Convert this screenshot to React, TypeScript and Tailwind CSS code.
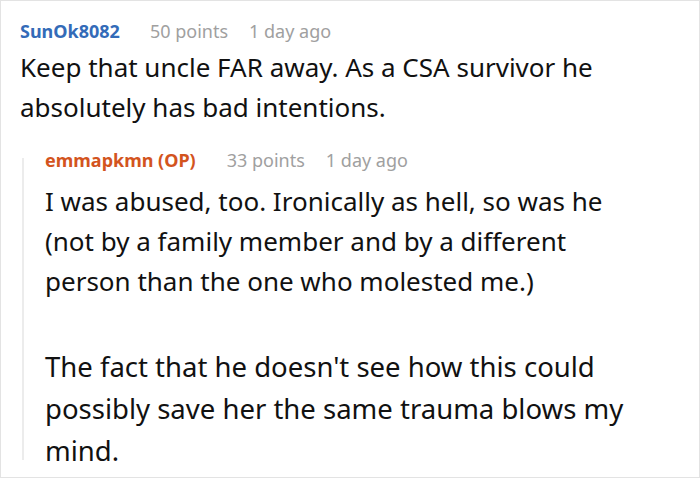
export default function App() {
  return (
    <div className="h-[478px] w-[700px] overflow-hidden border border-[#e3e3e3] bg-white font-['Noto_Sans',sans-serif]">
      <div className="pl-[19px] pr-[30px] pt-[15px]">
        {/* top comment */}
        <div className="flex items-center text-[18px] leading-[30px]">
          <span className="font-bold text-[#336bb8]">SunOk8082</span>
          <span className="ml-[30px] text-[#a0a0a0]">50 points</span>
          <span className="ml-[21px] text-[#a0a0a0]">1 day ago</span>
        </div>
        <p className="mt-[1px] text-[26px] leading-[40px] text-[#111]">
          Keep that uncle FAR away. As a CSA survivor he absolutely has bad intentions.
        </p>

        {/* reply */}
        <div className="relative mt-[18px] pl-[25px] pr-[24px]">
          <span className="absolute bottom-[12px] left-[2px] top-[13px] w-[2px] bg-[#ececec]" />
          <div className="flex items-center text-[18px] leading-[30px]">
            <span className="font-bold text-[#d3541e]">emmapkmn (OP)</span>
            <span className="ml-[31px] text-[#a0a0a0]">33 points</span>
            <span className="ml-[21px] text-[#a0a0a0]">1 day ago</span>
          </div>
          <p className="mt-[6px] text-[26px] leading-[40px] text-[#111]">
            I was abused, too. Ironically as hell, so was he (not by a family member and by a different person than the one who molested me.)
          </p>
          <p className="mt-[45px] text-[27.5px] leading-[42px] text-[#111]">
            The fact that he doesn't see how this could possibly save her the same trauma blows my mind.
          </p>
        </div>
      </div>
    </div>
  );
}
